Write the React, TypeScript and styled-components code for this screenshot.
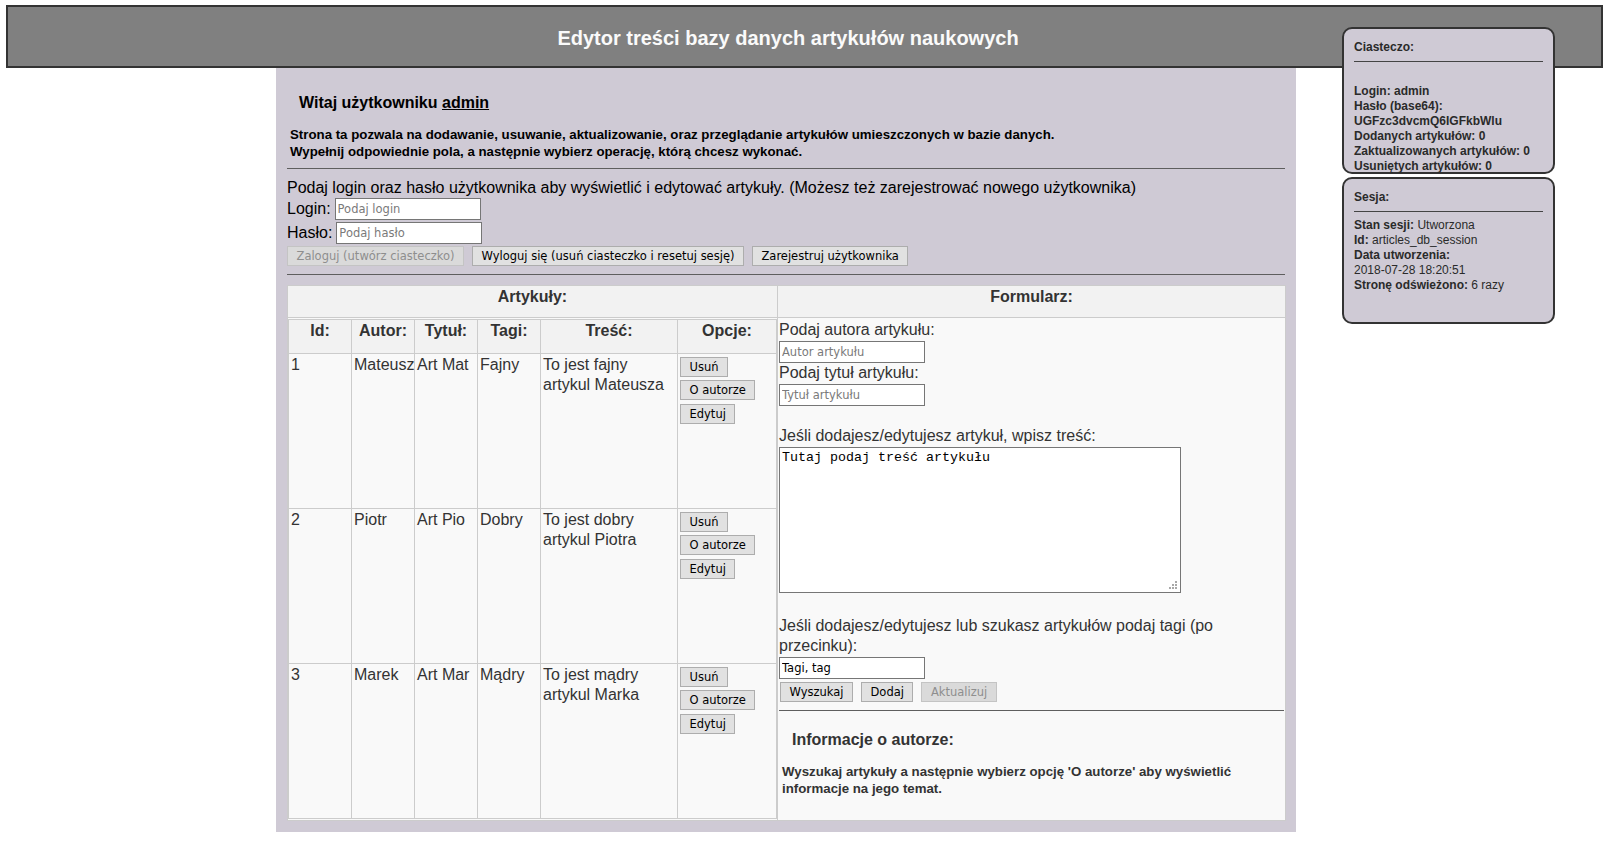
import React from 'react';
import styled, { createGlobalStyle } from 'styled-components';

const GlobalStyle = createGlobalStyle`
  body {
    margin: 0;
    background: #fff;
    font-family: "Liberation Sans", Arial, sans-serif;
  }
`;

const lavender = '#cfcad5';

const Header = styled.header`
  margin: 5px 19px 0 6px;
  height: 55px;
  padding: 4px 33px 0 0;
  display: flex;
  align-items: center;
  justify-content: center;
  background: #808080;
  border: 2px solid #333;
`;

const Title = styled.h1`
  margin: 0;
  font-size: 20px;
  font-weight: bold;
  color: #fafafa;
`;

const Main = styled.div`
  width: 1572px;
`;

const Panel = styled.main`
  display: flow-root;
  width: 1020px;
  margin: 0 auto;
  box-sizing: border-box;
  padding: 0 11px 11px;
  background: ${lavender};
`;

const Welcome = styled.h4`
  margin: 26px 0 0 12px;
  font-size: 16px;
  line-height: 18px;
  color: #000;
`;

const UserName = styled.span`
  text-decoration: underline;
`;

const Intro = styled.h5`
  margin: 15px 0 0 3px;
  font-size: 13.28px;
  line-height: 16.5px;
  color: inherit;
`;

const Rule = styled.hr<{ $top: number }>`
  margin: ${(p) => p.$top}px 0 0;
  height: 0;
  border: 0;
  border-top: 1px solid #5e5e5e;
`;

const Prompt = styled.p`
  margin: 10px 0 0;
  font-size: 16px;
  line-height: 18px;
`;

const FieldRow = styled.div<{ $height: number }>`
  display: flex;
  align-items: center;
  gap: 4px;
  height: ${(p) => p.$height}px;
  font-size: 16px;
`;

const ButtonRow = styled.div<{ $height: number; $top?: number; $indent?: number }>`
  display: flex;
  align-items: center;
  gap: 8px;
  height: ${(p) => p.$height}px;
  margin: ${(p) => p.$top ?? 0}px 0 0 ${(p) => p.$indent ?? 0}px;
`;

const Button = styled.button`
  height: 20px;
  margin: 0;
  padding: 0 8.5px;
  font-family: "DejaVu Sans", sans-serif;
  font-size: 11.5px;
  color: #000;
  background: #e1e1e1;
  border: 1px solid #adadad;
  white-space: nowrap;
  &:disabled {
    color: #8e8e8e;
    background: #dadada;
    border-color: #c4c4c4;
  }
`;

const TextField = styled.input<{ $top?: number }>`
  display: block;
  width: 146px;
  height: 22px;
  box-sizing: border-box;
  margin: ${(p) => p.$top ?? 0}px 0 0;
  padding: 1px 2px;
  font-family: "DejaVu Sans", sans-serif;
  font-size: 11.5px;
  color: #000;
  background: #fff;
  border: 1px solid #767676;
  &::placeholder {
    color: #7a7a7a;
  }
`;

const Board = styled.table`
  margin-top: 10px;
  width: 998px;
  border-collapse: collapse;
  table-layout: fixed;
  color: #333;
`;

const HeadCell = styled.th<{ $height: number }>`
  height: ${(p) => p.$height}px;
  padding: 2px;
  vertical-align: top;
  text-align: center;
  background: #f2f2f2;
  border: 1px solid #ccc;
  font-size: 16px;
  line-height: 18px;
`;

const BoardCell = styled.td<{ $pad: string }>`
  padding: ${(p) => p.$pad};
  vertical-align: top;
  background: #f9f9f9;
  border: 1px solid #ccc;
`;

const ArticleTable = styled.table`
  width: 488px;
  border-collapse: collapse;
  table-layout: fixed;
`;

const Cell = styled.td`
  height: 151px;
  padding: 1px 2px 2px;
  vertical-align: top;
  border: 1px solid #ccc;
  font-size: 16px;
  line-height: 20px;
`;

const OptionStack = styled.div`
  display: flex;
  flex-direction: column;
  align-items: flex-start;
  gap: 3.5px;
  padding-top: 1.5px;
`;

const FieldLabel = styled.div<{ $top?: number }>`
  margin-top: ${(p) => p.$top ?? 0}px;
  font-size: 16px;
  line-height: 20px;
`;

const AreaWrap = styled.div`
  position: relative;
  width: 402px;
  margin-top: 1px;
`;

const ContentArea = styled.textarea`
  display: block;
  width: 402px;
  height: 146px;
  box-sizing: border-box;
  margin: 0;
  padding: 2px;
  font-family: "Liberation Mono", "Courier New", monospace;
  font-size: 13.33px;
  color: #000;
  background: #fff;
  border: 1px solid #767676;
  resize: none;
`;

const Grip = styled.svg`
  position: absolute;
  right: 3px;
  bottom: 3px;
  width: 10px;
  height: 10px;
`;

const AuthorTitle = styled.h4`
  margin: 20px 0 0 13px;
  font-size: 16px;
  line-height: 18px;
`;

const SideStack = styled.aside`
  position: absolute;
  top: 27px;
  left: 1342px;
  width: 213px;
  display: flex;
  flex-direction: column;
  gap: 3px;
`;

const InfoBox = styled.section`
  height: 147px;
  box-sizing: border-box;
  padding: 11px 10px 10px;
  background: ${lavender};
  border: 2px solid #333;
  border-radius: 10px;
  font-size: 12px;
  line-height: 15px;
  font-weight: bold;
  color: #2a2a2a;
`;

const BoxRule = styled.hr`
  margin: 6px 0 0;
  height: 0;
  border: 0;
  border-top: 1px solid #444;
`;

const BoxLines = styled.div<{ $lead: number }>`
  padding-top: ${(p) => p.$lead}px;
`;

const Plain = styled.span`
  font-weight: normal;
`;

const articles = [
  { id: 1, author: 'Mateusz', title: 'Art Mat', tags: 'Fajny', body: 'To jest fajny artykul Mateusza' },
  { id: 2, author: 'Piotr', title: 'Art Pio', tags: 'Dobry', body: 'To jest dobry artykul Piotra' },
  { id: 3, author: 'Marek', title: 'Art Mar', tags: 'Mądry', body: 'To jest mądry artykul Marka' }
];

const columns = [
  { label: 'Id:', width: 63 },
  { label: 'Autor:', width: 63 },
  { label: 'Tytuł:', width: 63 },
  { label: 'Tagi:', width: 63 },
  { label: 'Treść:', width: 137 },
  { label: 'Opcje:', width: 99 }
];

const session = [
  { label: 'Stan sesji:', value: 'Utworzona' },
  { label: 'Id:', value: 'articles_db_session' },
  { label: 'Data utworzenia:', value: '2018-07-28 18:20:51', below: true },
  { label: 'Stronę odświeżono:', value: '6 razy' }
];

const gripDots = [
  [7, 1],
  [4, 4],
  [7, 4],
  [1, 7],
  [4, 7],
  [7, 7]
];

const App: React.FC = () => (
  <>
    <GlobalStyle />
    <Header>
      <Title>Edytor treści bazy danych artykułów naukowych</Title>
    </Header>
    <Main>
      <Panel>
        <Welcome>
          Witaj użytkowniku <UserName>admin</UserName>
        </Welcome>
        <Intro>
          Strona ta pozwala na dodawanie, usuwanie, aktualizowanie, oraz przeglądanie artykułów umieszczonych w bazie danych.
          <br />
          Wypełnij odpowiednie pola, a następnie wybierz operację, którą chcesz wykonać.
        </Intro>
        <Rule $top={8} />
        <Prompt>
          Podaj login oraz hasło użytkownika aby wyświetlić i edytować artykuły. (Możesz też zarejestrować nowego użytkownika)
        </Prompt>
        <FieldRow $height={24}>
          Login: <TextField placeholder="Podaj login" />
        </FieldRow>
        <FieldRow $height={23}>
          Hasło: <TextField type="password" placeholder="Podaj hasło" />
        </FieldRow>
        <ButtonRow $height={24}>
          <Button disabled>Zaloguj (utwórz ciasteczko)</Button>
          <Button>Wyloguj się (usuń ciasteczko i resetuj sesję)</Button>
          <Button>Zarejestruj użytkownika</Button>
        </ButtonRow>
        <Rule $top={6} />
        <Board>
          <colgroup>
            <col style={{ width: 490 }} />
            <col style={{ width: 508 }} />
          </colgroup>
          <thead>
            <tr>
              <HeadCell $height={27}>Artykuły:</HeadCell>
              <HeadCell $height={27}>Formularz:</HeadCell>
            </tr>
          </thead>
          <tbody>
            <tr>
              <BoardCell $pad="1px 0 1px 0">
                <ArticleTable>
                  <colgroup>
                    {columns.map((c) => (
                      <col key={c.label} style={{ width: c.width }} />
                    ))}
                  </colgroup>
                  <thead>
                    <tr>
                      {columns.map((c) => (
                        <HeadCell key={c.label} $height={29}>
                          {c.label}
                        </HeadCell>
                      ))}
                    </tr>
                  </thead>
                  <tbody>
                    {articles.map((a) => (
                      <tr key={a.id}>
                        <Cell>{a.id}</Cell>
                        <Cell>{a.author}</Cell>
                        <Cell>{a.title}</Cell>
                        <Cell>{a.tags}</Cell>
                        <Cell>{a.body}</Cell>
                        <Cell>
                          <OptionStack>
                            <Button>Usuń</Button>
                            <Button>O autorze</Button>
                            <Button>Edytuj</Button>
                          </OptionStack>
                        </Cell>
                      </tr>
                    ))}
                  </tbody>
                </ArticleTable>
              </BoardCell>
              <BoardCell $pad="2px 1px 1px">
                <FieldLabel>Podaj autora artykułu:</FieldLabel>
                <TextField $top={1} placeholder="Autor artykułu" />
                <FieldLabel>Podaj tytuł artykułu:</FieldLabel>
                <TextField $top={1} placeholder="Tytuł artykułu" />
                <FieldLabel $top={20}>Jeśli dodajesz/edytujesz artykuł, wpisz treść:</FieldLabel>
                <AreaWrap>
                  <ContentArea defaultValue="Tutaj podaj treść artykułu" />
                  <Grip viewBox="0 0 10 10">
                    {gripDots.map(([x, y]) => (
                      <rect key={`${x}-${y}`} x={x} y={y} width="2" height="2" fill="#a8a8a8" />
                    ))}
                  </Grip>
                </AreaWrap>
                <FieldLabel $top={23}>
                  Jeśli dodajesz/edytujesz lub szukasz artykułów podaj tagi (po przecinku):
                </FieldLabel>
                <TextField $top={1} defaultValue="Tagi, tag" />
                <ButtonRow $height={20} $top={3} $indent={1}>
                  <Button>Wyszukaj</Button>
                  <Button>Dodaj</Button>
                  <Button disabled>Aktualizuj</Button>
                </ButtonRow>
                <Rule $top={8} />
                <AuthorTitle>Informacje o autorze:</AuthorTitle>
                <Intro>
                  Wyszukaj artykuły a następnie wybierz opcję 'O autorze' aby wyświetlić informacje na jego temat.
                </Intro>
              </BoardCell>
            </tr>
          </tbody>
        </Board>
      </Panel>
    </Main>
    <SideStack>
      <InfoBox>
        <div>Ciasteczo:</div>
        <BoxRule />
        <BoxLines $lead={22}>
          <div>Login: admin</div>
          <div>Hasło (base64):</div>
          <div>UGFzc3dvcmQ6IGFkbWlu</div>
          <div>Dodanych artykułów: 0</div>
          <div>Zaktualizowanych artykułów: 0</div>
          <div>Usuniętych artykułów: 0</div>
        </BoxLines>
      </InfoBox>
      <InfoBox>
        <div>Sesja:</div>
        <BoxRule />
        <BoxLines $lead={6}>
          {session.map((s) => (
            <div key={s.label}>
              {s.label}
              {s.below ? <br /> : ' '}
              <Plain>{s.value}</Plain>
            </div>
          ))}
        </BoxLines>
      </InfoBox>
    </SideStack>
  </>
);

export default App;
